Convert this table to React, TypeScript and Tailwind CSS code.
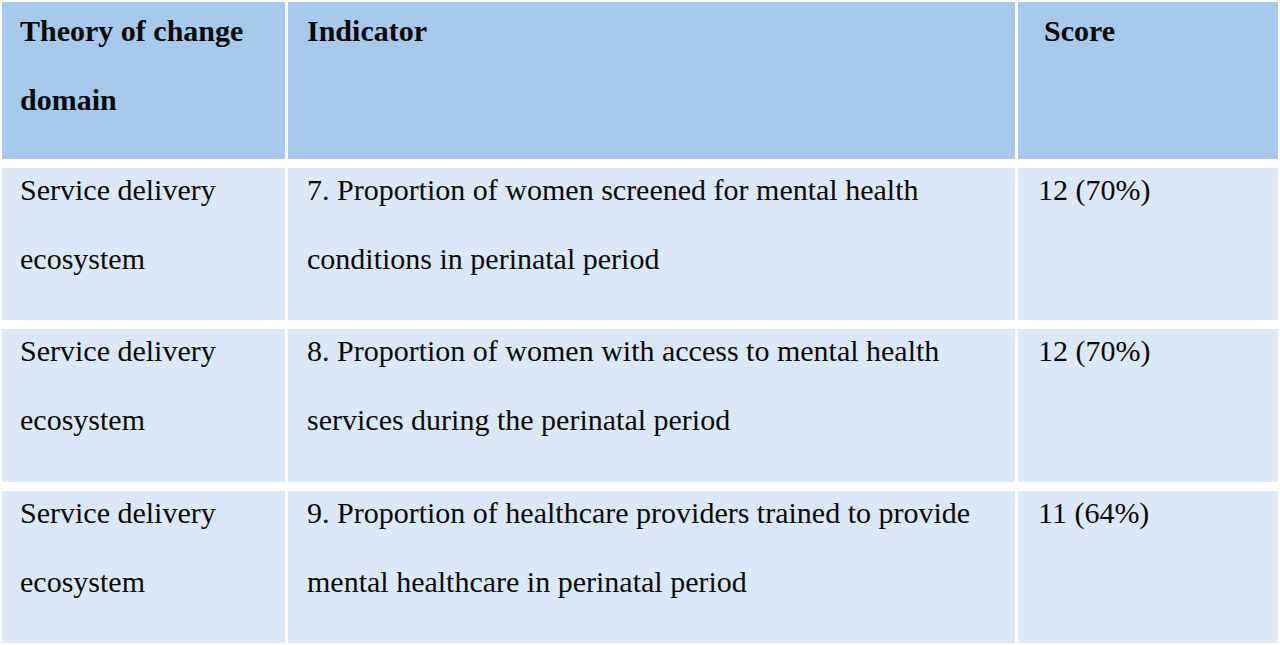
const rows = [
  {
    domain: ["Service delivery", "ecosystem"],
    indicator: ["7. Proportion of women screened for mental health", "conditions in perinatal period"],
    score: "12 (70%)",
  },
  {
    domain: ["Service delivery", "ecosystem"],
    indicator: ["8. Proportion of women with access to mental health", "services during the perinatal period"],
    score: "12 (70%)",
  },
  {
    domain: ["Service delivery", "ecosystem"],
    indicator: ["9. Proportion of healthcare providers trained to provide", "mental healthcare in perinatal period"],
    score: "11 (64%)",
  },
];

function Lines({ lines }: { lines: string[] }) {
  return (
    <>
      {lines.map((l) => (
        <div key={l} className="whitespace-nowrap">{l}</div>
      ))}
    </>
  );
}

export default function App() {
  return (
    <div
      className="w-[1280px] h-[645px] bg-white pt-[2px] pl-[2px] overflow-hidden text-[#0a0a0a] text-[30px] leading-[69px]"
      style={{ fontFamily: '"Liberation Serif", "Times New Roman", serif' }}
    >
      <div className="grid grid-cols-[283px_727px_260px] grid-rows-[157px_152px_153px_152px] gap-x-[3px] gap-y-[9px]">
        {/* header */}
        <div className="bg-[#a6c9ec] pl-[18px] font-bold">
          <div className="-mt-[6px]">
            <Lines lines={["Theory of change", "domain"]} />
          </div>
        </div>
        <div className="bg-[#a6c9ec] pl-[19px] font-bold">
          <div className="-mt-[6px]">Indicator</div>
        </div>
        <div className="bg-[#a6c9ec] pl-[26px] font-bold">
          <div className="-mt-[6px]">Score</div>
        </div>

        {rows.map((r, i) => (
          <div key={i} className="contents">
            <div className="bg-[#dae8f7] pl-[18px]">
              <div className="-mt-[13px]">
                <Lines lines={r.domain} />
              </div>
            </div>
            <div className="bg-[#dae8f7] pl-[19px]">
              <div className="-mt-[13px]">
                <Lines lines={r.indicator} />
              </div>
            </div>
            <div className="bg-[#dae8f7] pl-[20px]">
              <div className="-mt-[13px]">{r.score}</div>
            </div>
          </div>
        ))}
      </div>
    </div>
  );
}
